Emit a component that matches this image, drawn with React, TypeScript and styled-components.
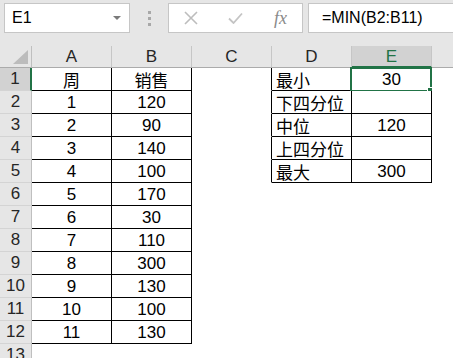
import styled, { createGlobalStyle } from 'styled-components'

const GlobalStyle = createGlobalStyle`
    html, body {
        margin: 0;
        padding: 0;
        width: 453px;
        height: 358px;
        overflow: hidden;
        background: #ffffff;
        font-family: "Liberation Sans", "Noto Sans CJK SC", sans-serif;
    }
`

const GREEN = '#217346'

const Window = styled.div`
    width: 453px;
    height: 358px;
    overflow: hidden;
    display: flex;
    flex-direction: column;
`

const FormulaBar = styled.div`
    height: 46px;
    flex: none;
    background: #e6e6e6;
    display: flex;
    align-items: flex-start;
    padding: 3px 0 0 4px;
    box-sizing: border-box;
`

const NameBox = styled.div`
    width: 126px;
    height: 30px;
    box-sizing: border-box;
    background: #ffffff;
    border: 1px solid #c6c6c6;
    display: flex;
    align-items: center;
    justify-content: space-between;
    padding: 0 8px 0 7px;
    font-size: 16px;
    color: #000;
`

const DropArrow = styled.span`
    width: 0;
    height: 0;
    border-left: 4px solid transparent;
    border-right: 4px solid transparent;
    border-top: 4px solid #7a7a7a;
`

const Grip = styled.div`
    width: 38px;
    height: 30px;
    display: flex;
    flex-direction: column;
    align-items: center;
    justify-content: center;
    gap: 3px;
`

const GripDot = styled.span`
    width: 3px;
    height: 3px;
    background: #a8a8a8;
`

const ActionBox = styled.div`
    width: 135px;
    height: 30px;
    box-sizing: border-box;
    background: #ffffff;
    border: 1px solid #c6c6c6;
    display: flex;
    align-items: center;
`

const ActionIcon = styled.span`
    width: 44px;
    height: 28px;
    display: flex;
    align-items: center;
    justify-content: center;
`

const FxLabel = styled.span`
    font-family: "Liberation Serif", serif;
    font-style: italic;
    font-size: 18px;
    color: #8a8a8a;
    margin-left: 17px;
`

const FormulaInput = styled.div`
    flex: 1;
    margin-left: 5px;
    height: 30px;
    box-sizing: border-box;
    background: #ffffff;
    border: 1px solid #c6c6c6;
    border-right: none;
    display: flex;
    align-items: center;
    padding-left: 13px;
    font-size: 16px;
    color: #000;
    white-space: nowrap;
`

const Sheet = styled.div`
    display: grid;
    grid-template-columns: 32px repeat(6, 80px);
    grid-template-rows: 22px;
    grid-auto-rows: 23px;
    font-size: 17px;
`

const Corner = styled.div`
    background: #e6e6e6;
    border-right: 1px solid #bfbfbf;
    border-bottom: 1px solid #ababab;
    box-sizing: border-box;
    display: flex;
    align-items: flex-end;
    justify-content: flex-end;
    padding: 0 3px 3px 0;
`

const ColHead = styled.div<{ $active?: boolean }>`
    box-sizing: border-box;
    background: ${p => (p.$active ? '#d2d2d2' : '#e6e6e6')};
    color: ${p => (p.$active ? GREEN : '#262626')};
    border-right: 1px solid #c6c6c6;
    border-bottom: ${p => (p.$active ? `2px solid ${GREEN}` : '1px solid #ababab')};
    display: flex;
    align-items: center;
    justify-content: center;
    font-size: 17px;
    padding-top: ${p => (p.$active ? '1px' : '0')};
`

const RowHead = styled.div<{ $active?: boolean }>`
    box-sizing: border-box;
    background: ${p => (p.$active ? '#d2d2d2' : '#e6e6e6')};
    color: #262626;
    border-right: ${p => (p.$active ? `2px solid ${GREEN}` : '1px solid #bfbfbf')};
    border-bottom: 1px solid #d4d4d4;
    display: flex;
    align-items: center;
    justify-content: center;
    font-size: 17px;
`

const Cell = styled.div<{ $right?: boolean; $bottom?: boolean; $align?: 'left' | 'center' }>`
    position: relative;
    box-sizing: border-box;
    background: #ffffff;
    color: #000;
    border-right: 1px solid ${p => (p.$right ? '#000' : 'transparent')};
    border-bottom: 1px solid ${p => (p.$bottom ? '#000' : 'transparent')};
    display: flex;
    align-items: center;
    justify-content: ${p => (p.$align === 'left' ? 'flex-start' : 'center')};
    padding-left: ${p => (p.$align === 'left' ? '4px' : '0')};
    padding-top: 1px;
    white-space: nowrap;
`

const Selection = styled.div`
    position: absolute;
    left: -2px;
    top: -1px;
    width: 82px;
    height: 25px;
    box-sizing: border-box;
    border: 2px solid ${GREEN};
    pointer-events: none;
`

const FillHandle = styled.span`
    position: absolute;
    right: -4px;
    bottom: -4px;
    width: 5px;
    height: 5px;
    background: ${GREEN};
    border: 1px solid #ffffff;
`

const sales: [string, string][] = [
    ['周', '销售'],
    ['1', '120'],
    ['2', '90'],
    ['3', '140'],
    ['4', '100'],
    ['5', '170'],
    ['6', '30'],
    ['7', '110'],
    ['8', '300'],
    ['9', '130'],
    ['10', '100'],
    ['11', '130'],
]

const stats: [string, string][] = [
    ['最小', '30'],
    ['下四分位', ''],
    ['中位', '120'],
    ['上四分位', ''],
    ['最大', '300'],
]

const columns = ['A', 'B', 'C', 'D', 'E', 'F']

function App() {
    const rows = Array.from({ length: 13 }, (_, i) => i)

    return (
        <Window>
            <GlobalStyle />
            <FormulaBar>
                <NameBox>
                    E1
                    <DropArrow />
                </NameBox>
                <Grip>
                    <GripDot />
                    <GripDot />
                    <GripDot />
                </Grip>
                <ActionBox>
                    <ActionIcon>
                        <svg width="14" height="14" viewBox="0 0 14 14">
                            <path d="M1 1 L13 13 M13 1 L1 13" stroke="#bdbdbd" strokeWidth="1.6" fill="none" />
                        </svg>
                    </ActionIcon>
                    <ActionIcon>
                        <svg width="15" height="12" viewBox="0 0 15 12">
                            <path d="M1 6.5 L5.5 11 L14 1.5" stroke="#c4c4c4" strokeWidth="1.8" fill="none" />
                        </svg>
                    </ActionIcon>
                    <FxLabel>fx</FxLabel>
                </ActionBox>
                <FormulaInput>=MIN(B2:B11)</FormulaInput>
            </FormulaBar>

            <Sheet>
                <Corner>
                    <svg width="15" height="14" viewBox="0 0 15 14">
                        <polygon points="15,0 15,14 0,14" fill="#bcbcbc" />
                    </svg>
                </Corner>
                {columns.map(c => (
                    <ColHead key={c} $active={c === 'E'}>{c}</ColHead>
                ))}

                {rows.map(r => {
                    const inSales = r < sales.length
                    const inStats = r < stats.length
                    return [
                        <RowHead key={`h${r}`} $active={r === 0}>{r + 1}</RowHead>,
                        <Cell key={`a${r}`} $right={inSales} $bottom={inSales}>
                            {inSales ? sales[r][0] : ''}
                        </Cell>,
                        <Cell key={`b${r}`} $right={inSales} $bottom={inSales}>
                            {inSales ? sales[r][1] : ''}
                        </Cell>,
                        <Cell key={`c${r}`} $right={inStats} />,
                        <Cell key={`d${r}`} $right={inStats} $bottom={inStats} $align="left">
                            {inStats ? stats[r][0] : ''}
                        </Cell>,
                        <Cell key={`e${r}`} $right={inStats} $bottom={inStats}>
                            {inStats ? stats[r][1] : ''}
                            {r === 0 && (
                                <Selection>
                                    <FillHandle />
                                </Selection>
                            )}
                        </Cell>,
                        <Cell key={`f${r}`} />,
                    ]
                })}
            </Sheet>
        </Window>
    )
}

export default App
